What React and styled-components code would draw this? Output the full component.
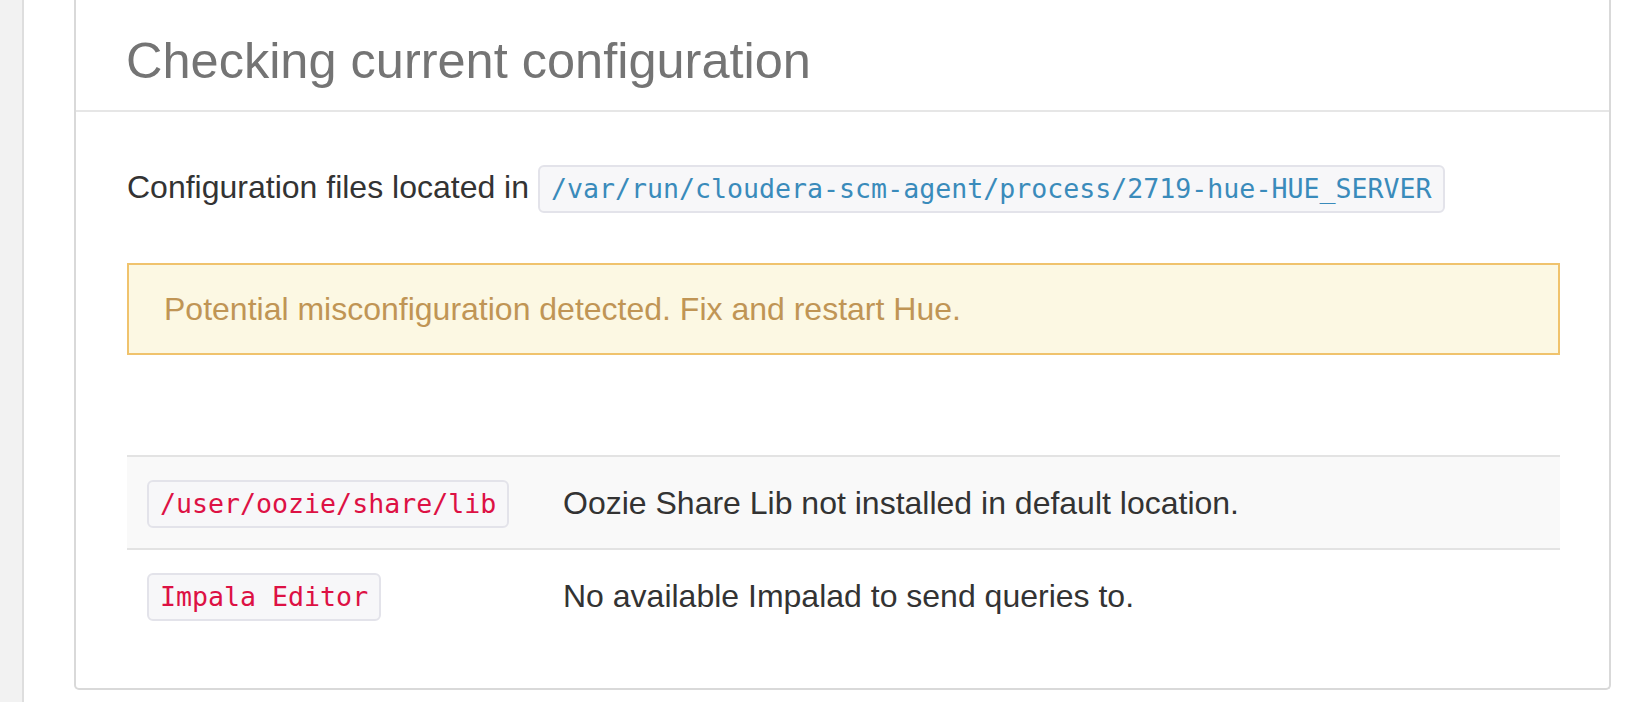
import React from 'react';
import styled, { createGlobalStyle } from 'styled-components';

const GlobalStyle = createGlobalStyle`
  *, *::before, *::after {
    box-sizing: border-box;
  }

  html, body {
    margin: 0;
    padding: 0;
    background: #ffffff;
  }

  body {
    font-family: "Liberation Sans", Arial, Helvetica, sans-serif;
    color: #333333;
  }
`

const checks = [
  { service: '/user/oozie/share/lib', message: 'Oozie Share Lib not installed in default location.' },
  { service: 'Impala Editor', message: 'No available Impalad to send queries to.' },
];

export default function App() {
  return (
    <>
      <GlobalStyle />
      <Page>
        <Sidebar />
        <Main>
          <Panel>
            <PanelHeader>
              <Title>Checking current configuration</Title>
            </PanelHeader>
            <PanelBody>
              <Paragraph>
                Configuration files located in <Code tone="path">/var/run/cloudera-scm-agent/process/2719-hue-HUE_SERVER</Code>
              </Paragraph>

              <Alert>Potential misconfiguration detected. Fix and restart Hue.</Alert>

              <Table>
                <tbody>
                  {checks.map((check, i) => (
                    <Row key={check.service} striped={i % 2 === 0}>
                      <KeyCell>
                        <Code tone="error">{check.service}</Code>
                      </KeyCell>
                      <Cell>{check.message}</Cell>
                    </Row>
                  ))}
                </tbody>
              </Table>
            </PanelBody>
          </Panel>
        </Main>
      </Page>
    </>
  );
}

const Page = styled.div`
  display: flex;
  min-height: 100vh;
`

const Sidebar = styled.div`
  width: 24px;
  flex-shrink: 0;
  background-color: #f2f2f2;
  border-right: 2px solid #dedede;
`

const Main = styled.div`
  flex: 1;
  padding: 0 39px 10px 50px;
`

const Panel = styled.div`
  border: 2px solid #d9d9d9;
  border-top: none;
  border-radius: 0 0 5px 5px;
  background-color: #ffffff;
`

const PanelHeader = styled.div`
  padding: 33px 50px 21px 50px;
  border-bottom: 2px solid #e6e6e6;
`

const Title = styled.h1`
  margin: 0;
  font-size: 50.5px;
  line-height: 56px;
  font-weight: 400;
  color: #747474;
`

const PanelBody = styled.div`
  padding: 51px 49px 47px 51px;
`

const Paragraph = styled.p`
  margin: 0;
  font-size: 32px;
  line-height: 48px;
  color: #333333;
`

const Code = styled.code`
  display: inline-block;
  height: 48px;
  padding: 0 11px;
  font-family: "DejaVu Sans Mono", "Liberation Mono", monospace;
  font-size: 26.6px;
  line-height: 44px;
  color: ${(props) => (props.tone === 'error' ? '#dd1144' : '#3a8bbb')};
  background-color: #f7f7f9;
  border: 2px solid #e3e3ea;
  border-radius: 6px;
  white-space: nowrap;
`

const Alert = styled.div`
  margin-top: 50px;
  padding: 22px 35px 21px 35px;
  font-size: 32px;
  line-height: 45px;
  color: #c09555;
  background-color: #fcf8e3;
  border: 2px solid #f0c36d;
`

const Table = styled.table`
  width: 100%;
  margin-top: 100px;
  border-collapse: collapse;
  table-layout: fixed;
`

const Row = styled.tr`
  background-color: ${(props) => (props.striped ? '#f9f9f9' : 'transparent')};
`

const Cell = styled.td`
  padding: 21px 20px 20px 20px;
  font-size: 32px;
  line-height: 48px;
  color: #333333;
  vertical-align: middle;
  border-top: 2px solid #e3e3e3;
`

const KeyCell = styled(Cell)`
  width: 416px;
`
